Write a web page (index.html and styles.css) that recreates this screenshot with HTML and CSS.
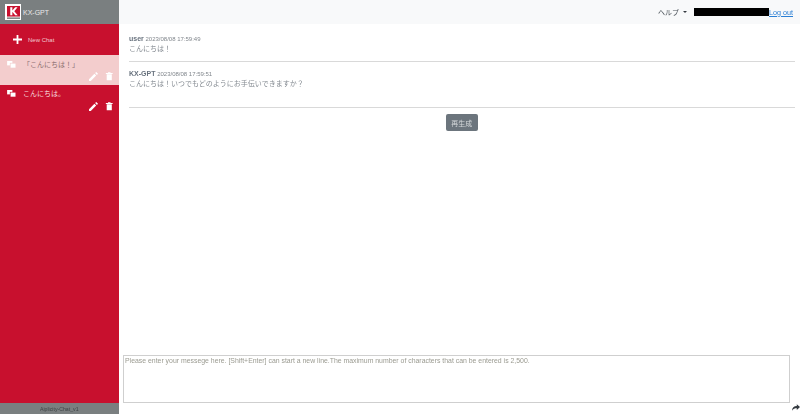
FILE: index.html
```html
<!DOCTYPE html>
<html lang="ja">
<head>
<meta charset="utf-8">
<title>KX-GPT</title>
<link rel="stylesheet" href="styles.css">
</head>
<body>
<div class="app">
  <aside class="sidebar">
    <div class="brand">
      <div class="logo">
        <svg viewBox="0 0 16 16" width="13" height="13"><rect width="16" height="13" fill="#c8102e"/><path d="M4 1.500h2.600v4L10 1.500h3L9 6.400 13.200 11.500h-3.100L6.600 7.200v4.300H4z" fill="#fff"/><rect y="14" width="16" height="2" fill="#888"/></svg>
      </div>
      <span class="brand-name">KX-GPT</span>
    </div>
    <div class="new-chat">
      <svg class="plus" viewBox="0 0 10 10" width="9" height="9"><path d="M4 0h2v4h4v2H6v4H4V6H0V4h4z" fill="#fff"/></svg>
      <span>New Chat</span>
    </div>
    <div class="chat active">
      <div class="chat-title">
        <svg class="bubbles" viewBox="0 0 10 8" width="9" height="7"><rect x="0" y="0" width="6" height="5" fill="#fff"/><rect x="3.500" y="2.500" width="6.500" height="5.500" fill="#fff" stroke="#f3cdcd" stroke-width=".7"/></svg>
        <span>「こんにちは！」</span>
      </div>
      <div class="chat-actions">
        <svg viewBox="0 0 10 10" width="9" height="9"><path d="M0 10V8l6-6 2 2-6 6zM6.800 1.200 8 0l2 2-1.200 1.200z" fill="#fff"/></svg>
        <svg viewBox="0 0 10 10" width="8.500" height="10"><path d="M1 1.500h8v1H1zM3.500.5h3v1h-3zM2 3h6v7H2z" fill="#fff"/></svg>
      </div>
    </div>
    <div class="chat">
      <div class="chat-title">
        <svg class="bubbles" viewBox="0 0 10 8" width="9" height="7"><rect x="0" y="0" width="6" height="5" fill="#fff"/><rect x="3.500" y="2.500" width="6.500" height="5.500" fill="#fff" stroke="#c8102e" stroke-width=".7"/></svg>
        <span>こんにちは。</span>
      </div>
      <div class="chat-actions">
        <svg viewBox="0 0 10 10" width="9" height="9"><path d="M0 10V8l6-6 2 2-6 6zM6.800 1.200 8 0l2 2-1.200 1.200z" fill="#fff"/></svg>
        <svg viewBox="0 0 10 10" width="8.500" height="10"><path d="M1 1.500h8v1H1zM3.500.5h3v1h-3zM2 3h6v7H2z" fill="#fff"/></svg>
      </div>
    </div>
    <div class="spacer"></div>
    <div class="version">Aiplicity-Chat_v1</div>
  </aside>
  <main class="main">
    <header class="topbar">
      <span class="help">ヘルプ<i class="caret"></i></span>
      <span class="redacted"></span>
      <a class="logout" href="#">Log out</a>
    </header>
    <section class="thread">
      <article class="msg first">
        <div class="meta"><b>user</b> <span>2023/08/08 17:59:49</span></div>
        <p>こんにちは！</p>
      </article>
      <article class="msg second">
        <div class="meta"><b>KX-GPT</b> <span>2023/08/08 17:59:51</span></div>
        <p>こんにちは！いつでもどのようにお手伝いできますか？</p>
      </article>
      <div class="regen"><button type="button">再生成</button></div>
    </section>
    <footer class="composer">
      <textarea placeholder="Please enter your messege here. [Shift+Enter] can start a new line.The maximum number of characters that can be entered is 2,500."></textarea>
      <svg class="send" viewBox="0 0 10 8" width="8" height="7"><path d="M6 0l4 3.500L6 7V5C3.500 5 1.500 5.500 0 8c0-3.500 2.500-6 6-6z" fill="#343a40"/></svg>
    </footer>
  </main>
</div>
</body>
</html>
```
FILE: styles.css
```css
* { box-sizing: border-box; }
html, body { margin: 0; height: 100%; }
body { font-family: "Liberation Sans", "Noto Sans CJK JP", sans-serif; color: #6c757d; overflow: hidden; background: #fff; }
.app { display: flex; height: 414px; filter: blur(0.3px); }
.sidebar { width: 118.500px; flex: none; background: #c8102e; display: flex; flex-direction: column; color: #fff; }
.brand { height: 24px; background: #7a7f80; display: flex; align-items: center; padding-left: 5px; gap: 2px; }
.logo { width: 16px; height: 16px; background: #fff; display: flex; align-items: center; justify-content: center; }
.brand-name { font-size: 7px; color: #e8e8e8; }
.new-chat { height: 31px; display: flex; align-items: center; padding-left: 13px; gap: 6px; font-size: 6px; color: #f0c8ce; }
.chat { height: 30px; padding: 4px 0 0 7px; font-size: 7px; color: #f7dcdc; }
.chat.active { background: #f3cdcd; color: #8c6f72; }
.chat + .chat { height: 31px; padding-top: 3px; }
.chat-title { display: flex; align-items: center; gap: 7px; height: 10px; }
.chat-actions { display: flex; justify-content: flex-end; align-items: center; gap: 7px; padding-right: 5px; margin-top: 2px; }
.chat + .chat .chat-actions { margin-top: 3px; }
.spacer { flex: 1; }
.version { height: 11px; background: #7a7f80; color: #3f4446; font-size: 5.200px; text-align: center; line-height: 12px; }
.main { flex: 1; display: flex; flex-direction: column; min-width: 0; }
.topbar { height: 24px; background: #f8f9fa; display: flex; align-items: center; justify-content: flex-end; font-size: 7px; padding-right: 7px; color: #495057; }
.help { margin-right: 7px; display: inline-flex; align-items: center; }
.caret { display: inline-block; margin-left: 4px; border-top: 2.500px solid #343a40; border-left: 2px solid transparent; border-right: 2px solid transparent; }
.redacted { width: 75px; height: 8px; background: #000; }
.logout { color: #2a7fd5; font-size: 7.200px; text-decoration: underline; }
.thread { flex: 1; padding: 10px 5.500px 0 10.500px; min-height: 0; }
.msg { border-bottom: 1px solid #d9d9d9; }
.msg.first { height: 28px; }
.msg.second { height: 46px; padding-top: 7px; }
.meta { font-size: 6px; line-height: 9px; height: 9px; color: #80868c; }
.meta b { font-size: 7px; color: #68727e; }
.msg p { margin: 0; font-size: 7px; line-height: 11px; color: #858b92; }
.regen { display: flex; justify-content: center; margin-top: 6px; }
.regen button { width: 32px; height: 17px; padding: 0; border: 0; border-radius: 2px; background: #6c757d; color: #d5d8da; font: inherit; font-size: 7px; }
.composer { height: 59px; display: flex; align-items: flex-end; padding: 0 0 3px 4.500px; }
.composer textarea { width: 667px; height: 48px; margin-bottom: 8px; padding: 0 1px; border: 1px solid #cfcfcf; resize: none; font-family: inherit; font-size: 6.900px; line-height: 9px; outline: none; background: #fff; }
.composer textarea::placeholder { color: #9a9a90; opacity: 1; }
.send { margin: 0 0 0 1.500px; }
```
